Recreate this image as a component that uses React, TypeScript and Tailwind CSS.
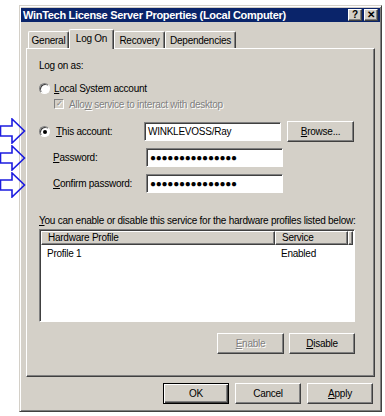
const raised =
  "border border-t-white border-l-white border-r-[#404040] border-b-[#404040] shadow-[inset_-1px_-1px_0_#808080]";

function Btn({
  label,
  u,
  w,
  disabled,
  isDefault,
}: {
  label: string;
  u?: number;
  w: number;
  disabled?: boolean;
  isDefault?: boolean;
}) {
  const text =
    u === undefined ? (
      label
    ) : (
      <>
        {label.slice(0, u)}
        <span className="underline">{label[u]}</span>
        {label.slice(u + 1)}
      </>
    );
  return (
    <div
      style={{ width: w }}
      className={
        "flex h-[21px] items-center justify-center " +
        (isDefault
          ? "border border-black shadow-[inset_1px_1px_0_#fff,inset_-1px_-1px_0_#404040,inset_-2px_-2px_0_#808080]"
          : raised) +
        (disabled ? " text-[#808080] [text-shadow:1px_1px_0_#fff]" : " text-black")
      }
    >
      {text}
    </div>
  );
}

function Radio({ checked }: { checked?: boolean }) {
  return (
    <div className="flex h-[11px] w-[11px] items-center justify-center rounded-full border border-t-[#808080] border-l-[#808080] border-r-white border-b-white bg-white shadow-[inset_1px_1px_0_#404040]">
      {checked && <div className="h-[4px] w-[4px] rounded-full bg-black" />}
    </div>
  );
}

function Field({ value }: { value: string }) {
  return (
    <div className="flex h-[19px] w-[137px] items-center border border-t-[#808080] border-l-[#808080] border-r-white border-b-white bg-white pl-[3px] shadow-[inset_1px_1px_0_#404040]">
      {value}
    </div>
  );
}

function Arrow({ top }: { top: number }) {
  return (
    <svg
      className="absolute left-0"
      style={{ top }}
      width="26"
      height="26"
      viewBox="0 0 26 26"
    >
      <polygon
        points="0.5,8 12,8 12,1 24.5,13 12,25 12,18 0.5,18"
        fill="none"
        stroke="#1c1ce0"
        strokeWidth="1.6"
      />
    </svg>
  );
}

export default function App() {
  const dots = "●●●●●●●●●●●●●●●";
  return (
    <div className="relative h-[416px] w-[385px] overflow-hidden bg-white pl-[19px] pt-[5px] font-['Liberation_Sans',sans-serif] text-[10px] leading-[13px] tracking-[-0.25px] whitespace-nowrap text-black">
      <div className="h-[407px] w-[363px] border border-t-[#d4d0c8] border-l-[#d4d0c8] border-r-[#404040] border-b-[#404040] bg-[#d4d0c8] shadow-[inset_1px_1px_0_#fff,inset_-1px_-1px_0_#808080]">
        {/* title bar */}
        <div className="mx-[1px] mt-[2px] flex h-[14px] items-center justify-between bg-[#0a246a] pl-[2px] pr-[2px]">
          <span className="text-[11px] font-bold tracking-[-0.3px] text-white">
            WinTech License Server Properties (Local Computer)
          </span>
          <div className="flex gap-[2px] tracking-normal">
            <div className={"flex h-[12px] w-[14px] items-center justify-center bg-[#d4d0c8] text-[10px] font-bold leading-none " + raised}>
              ?
            </div>
            <div className={"flex h-[12px] w-[14px] items-center justify-center bg-[#d4d0c8] text-[10px] font-bold leading-none " + raised}>
              ✕
            </div>
          </div>
        </div>

        {/* tabs */}
        <div className="ml-[6px] w-[349px]">
          <div className="relative z-10 mt-[7px] flex h-[19px] items-end pl-[2px]">
            {[
              ["General", 41],
              ["Log On", 45],
              ["Recovery", 51],
              ["Dependencies", 71],
            ].map(([t, w]) => {
              const active = t === "Log On";
              return (
                <div
                  key={t as string}
                  style={{ width: w as number }}
                  className={
                    "flex items-center justify-center rounded-t-[2px] border-l border-t border-r border-l-white border-t-white border-r-[#404040] bg-[#d4d0c8] shadow-[inset_-1px_0_0_#808080] " +
                    (active ? "-mb-[1px] h-[20px] pb-[2px]" : "h-[17px]")
                  }
                >
                  {t}
                </div>
              );
            })}
          </div>

          {/* panel */}
          <div className="h-[329px] border border-t-white border-l-white border-r-[#404040] border-b-[#404040] pl-[12px] pt-[10px] shadow-[inset_-1px_-1px_0_#808080]">
            <div className="h-[13px]">Log on as:</div>
            <div className="mt-[8px] flex h-[16px] items-center">
              <Radio />
              <span className="ml-[4px]">
                <span className="underline">L</span>ocal System account
              </span>
            </div>
            <div className="flex h-[16px] items-center pl-[15px] text-[#808080] [text-shadow:1px_1px_0_#fff]">
              <div className="flex h-[10px] w-[10px] items-center justify-center border border-t-[#808080] border-l-[#808080] border-r-white border-b-white bg-[#d4d0c8] text-[8px] leading-none text-[#808080]">
                ✓
              </div>
              <span className="ml-[5px]">
                Allo<span className="underline">w</span> service to interact with desktop
              </span>
            </div>

            <div className="mt-[10px] flex h-[19px] items-center">
              <Radio checked />
              <span className="ml-[6px] w-[88px]">
                <span className="underline">T</span>his account:
              </span>
              <Field value="WINKLEVOSS/Ray" />
              <div className="ml-[6px]">
                <Btn label="Browse..." u={0} w={67} />
              </div>
            </div>
            <div className="mt-[7px] flex h-[19px] items-center pl-[14px]">
              <span className="w-[93px]">
                <span className="underline">P</span>assword:
              </span>
              <Field value={dots} />
            </div>
            <div className="mt-[7px] flex h-[19px] items-center pl-[14px]">
              <span className="w-[93px]">
                <span className="underline">C</span>onfirm password:
              </span>
              <Field value={dots} />
            </div>

            <div className="mt-[21px] h-[13px]">
              <span className="underline">Y</span>ou can enable or disable this service for the hardware profiles listed below:
            </div>
            <div className="mt-[2px] h-[93px] w-[316px] border border-t-[#808080] border-l-[#808080] border-r-white border-b-white bg-white shadow-[inset_1px_1px_0_#404040]">
              <div className="ml-[1px] mt-[1px] flex h-[14px] leading-none">
                <div className={"flex w-[234px] items-center bg-[#d4d0c8] pl-[6px] " + raised}>
                  Hardware Profile
                </div>
                <div className={"flex w-[73px] items-center bg-[#d4d0c8] pl-[6px] " + raised}>
                  Service
                </div>
                <div className={"w-[5px] bg-[#d4d0c8] " + raised} />
              </div>
              <div className="mt-[1px] flex h-[14px] items-center">
                <span className="w-[241px] pl-[7px]">Profile 1</span>
                <span>Enabled</span>
              </div>
            </div>

            <div className="ml-[178px] mt-[11px] flex gap-[5px]">
              <Btn label="Enable" u={0} w={67} disabled />
              <Btn label="Disable" u={0} w={66} />
            </div>
          </div>
        </div>

        {/* dialog buttons */}
        <div className="ml-[143px] mt-[6px] flex gap-[6px]">
          <Btn label="OK" w={66} isDefault />
          <Btn label="Cancel" w={66} />
          <Btn label="Apply" u={0} w={66} />
        </div>
      </div>

      <Arrow top={118} />
      <Arrow top={145} />
      <Arrow top={172} />
    </div>
  );
}
